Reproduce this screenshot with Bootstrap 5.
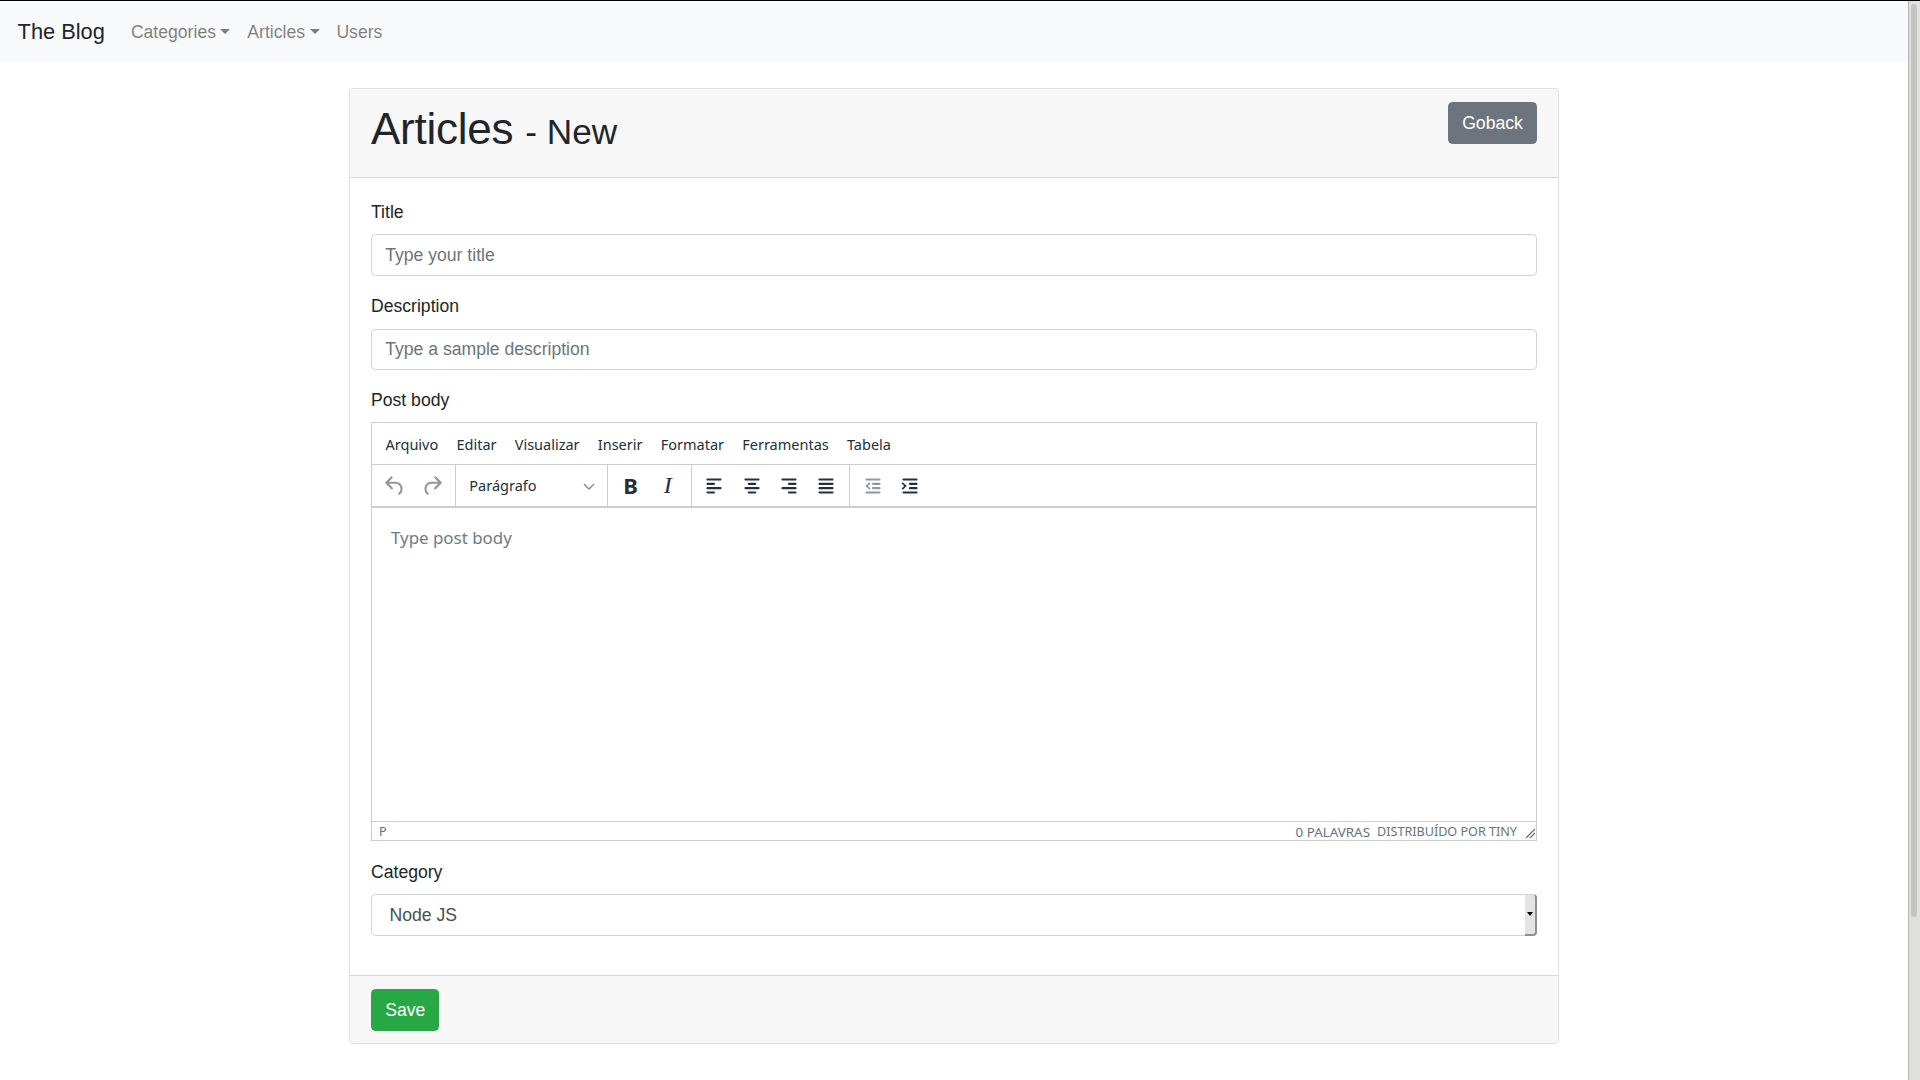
<!DOCTYPE html>
<html lang="en">
<head>
    <meta charset="UTF-8">
    <meta name="viewport" content="width=device-width, initial-scale=1.0">
    <title>Articles - New</title>
    <link href="https://cdn.jsdelivr.net/npm/bootstrap@5.3.0/dist/css/bootstrap.min.css" rel="stylesheet">
    <style>
        html {
            font-size: 17.6px;
        }

        body {
            font-family: "Liberation Sans", Arial, sans-serif;
            border-top: 1px solid #000;
            height: 100vh;
            overflow: hidden;
            color: #212529;
        }

        .page-main {
            min-width: 0;
        }

        .page-scroll {
            width: 12px;
            background: #e0e0de;
            border-left: 1px solid #b4b4b2;
        }

        .page-scroll div {
            width: 6px;
            height: 913px;
            margin: 3px 0 0 2px;
            background: #c3c3c1;
            border-radius: 3px;
        }

        .top-bar {
            height: 61px;
            background: #f8f9fa;
            padding: 0 1rem;
        }

        .top-bar .navbar-brand {
            color: #212529;
            font-size: 21.8px;
            padding-top: 8px;
        }

        .top-bar .nav-link {
            color: rgba(0, 0, 0, .5);
            padding: 2px .48rem 0;
        }

        .page-box {
            --bs-card-border-color: rgba(0, 0, 0, .125);
            --bs-card-inner-border-radius: 3.4px;
            width: 1210px;
            margin: 26px auto 0;
            border-radius: 4.4px;
        }

        .page-box > .card-header,
        .page-box > .card-footer {
            background: #f7f7f7;
            padding: .75rem 21px;
        }

        .page-box > .card-footer {
            padding-bottom: 12px;
        }

        .page-box > .card-body {
            padding: 21px 21px 21.6px;
        }

        .page-title {
            font-size: 44px;
            font-weight: 400;
            line-height: 1.2;
            letter-spacing: -.25px;
            padding-top: 1px;
            margin-bottom: 7.8px;
        }

        .page-title span {
            font-size: 35.2px;
            letter-spacing: 0;
        }

        .btn-goback {
            --bs-btn-bg: #6c757d;
            --bs-btn-border-color: #6c757d;
            --bs-btn-border-radius: 4.4px;
        }

        .btn-save {
            --bs-btn-bg: #28a745;
            --bs-btn-border-color: #28a745;
            --bs-btn-color: #fff;
            --bs-btn-border-radius: 4.4px;
        }

        .form-control {
            border-color: #ced4da;
            border-radius: 4.4px;
            color: #495057;
        }

        .form-control::placeholder {
            color: #6c757d;
        }

        .desc-group {
            margin-bottom: 16.6px;
        }

        .post-label {
            margin-bottom: 9px;
        }

        /* native select button of the reference */
        .pick-wrap select {
            height: 42px;
            padding-left: 17.6px;
        }

        .pick-arrow {
            position: absolute;
            top: 0;
            right: 0;
            bottom: 0;
            width: 12px;
            background: #e4e4e4;
            border-top: 1px solid #d6d6d6;
            border-right: 2px solid #8f8f8f;
            border-bottom: 2px solid #8f8f8f;
            border-radius: 0 4px 4px 0;
            pointer-events: none;
        }

        .pick-arrow::after {
            content: "";
            border-top: 4px solid #000;
            border-left: 3.5px solid transparent;
            border-right: 3.5px solid transparent;
        }

        /* editor */
        .editor-box {
            height: 419px;
            border: 1px solid #ccc;
            font-family: "Noto Sans", sans-serif;
            color: #222f3e;
        }

        .editor-menu {
            height: 42px;
            gap: 18.2px;
            padding: 3px 13.5px 0;
            font-size: 14.5px;
            border-bottom: 1px solid #ccc;
        }

        .editor-tools {
            height: 43px;
            border-bottom: 2px solid #ccc;
        }

        .tool-group {
            padding: 0 4px;
            border-right: 1px solid #ccc;
        }

        .tool-group.last-group {
            border-right: 0;
        }

        .tool-btn {
            width: 37.4px;
            height: 37.4px;
        }

        .tool-btn svg {
            width: 26px;
            height: 26px;
            fill: #222f3e;
        }

        .tool-btn.is-off svg {
            fill: rgba(34, 47, 62, .5);
        }

        .tool-bold {
            font: 700 22px "Noto Sans", sans-serif;
            padding-bottom: 2px;
        }

        .tool-italic {
            font: italic 400 24px "Liberation Serif", serif;
        }

        .format-pick {
            width: 143px;
            padding: 1px 8px 0 9.5px;
            font-size: 14.5px;
        }

        .format-pick svg {
            width: 12px;
            height: 7px;
            stroke: #7e8894;
            stroke-width: 1.4;
            fill: none;
        }

        .editor-text {
            padding: 17px 19px;
            font-size: 16.9px;
            color: #6f7a87;
        }

        .editor-status {
            height: 19px;
            border-top: 1px solid #ccc;
            padding: 3px 1px 0 7px;
            font-size: 12.6px;
            color: #67727f;
        }

        .status-right {
            gap: 7px;
            margin-right: 8px;
            text-transform: uppercase;
        }

        .status-count {
            font-size: 13.4px;
            line-height: 1;
        }

        .resize-mark {
            width: 10px;
            height: 10px;
            stroke: #5c6670;
            stroke-width: 1.2;
        }
    </style>
</head>

<body class="d-flex">
    <div class="page-main flex-grow-1">
        <nav class="navbar top-bar d-flex justify-content-start flex-nowrap">
            <a class="navbar-brand" href="#">The Blog</a>
            <div class="d-flex">
                <a class="nav-link dropdown-toggle" href="#">Categories</a>
                <a class="nav-link dropdown-toggle" href="#">Articles</a>
                <a class="nav-link" href="#">Users</a>
            </div>
        </nav>

        <div class="card page-box">
            <div class="card-header d-flex justify-content-between align-items-start">
                <h1 class="page-title">Articles <span>- New</span></h1>
                <a href="#" class="btn btn-secondary btn-goback">Goback</a>
            </div>
            <div class="card-body">
                <form>
                    <div class="mb-3">
                        <label for="title" class="form-label">Title</label>
                        <input type="text" class="form-control" id="title" placeholder="Type your title">
                    </div>
                    <div class="desc-group">
                        <label for="description" class="form-label">Description</label>
                        <input type="text" class="form-control" id="description" placeholder="Type a sample description">
                    </div>
                    <div class="mb-3">
                        <label class="form-label post-label">Post body</label>
                        <div class="editor-box d-flex flex-column">
                            <div class="editor-menu d-flex align-items-center">
                                <span>Arquivo</span>
                                <span>Editar</span>
                                <span>Visualizar</span>
                                <span>Inserir</span>
                                <span>Formatar</span>
                                <span>Ferramentas</span>
                                <span>Tabela</span>
                            </div>
                            <div class="editor-tools d-flex">
                                <div class="tool-group d-flex align-items-center">
                                    <div class="tool-btn is-off d-flex align-items-center justify-content-center">
                                        <svg viewBox="0 0 24 24"><path d="M6.4 8H12c3.7 0 6.2 2 6.8 5.1.6 2.7-.4 5.6-2.3 6.8a1 1 0 0 1-1-1.8c1.1-.7 1.8-2.7 1.4-4.6-.5-2.1-2.1-3.5-4.9-3.5H6.4l3.3 3.3a1 1 0 1 1-1.4 1.4l-5-5a1 1 0 0 1 0-1.4l5-5a1 1 0 0 1 1.4 1.4L6.4 8z"/></svg>
                                    </div>
                                    <div class="tool-btn is-off d-flex align-items-center justify-content-center">
                                        <svg viewBox="0 0 24 24"><path d="M17.6 8H12c-3.7 0-6.2 2-6.8 5.1-.6 2.7.4 5.6 2.3 6.8a1 1 0 0 0 1-1.8c-1.1-.7-1.8-2.7-1.4-4.6.5-2.1 2.1-3.5 4.9-3.5h5.6l-3.3 3.3a1 1 0 1 0 1.4 1.4l5-5a1 1 0 0 0 0-1.4l-5-5a1 1 0 0 0-1.4 1.4L17.6 8z"/></svg>
                                    </div>
                                </div>
                                <div class="tool-group d-flex align-items-center">
                                    <div class="format-pick d-flex align-items-center justify-content-between">
                                        <span>Parágrafo</span>
                                        <svg viewBox="0 0 12 7"><path d="M1 1l5 5 5-5"/></svg>
                                    </div>
                                </div>
                                <div class="tool-group d-flex align-items-center">
                                    <div class="tool-btn tool-bold d-flex align-items-center justify-content-center">B</div>
                                    <div class="tool-btn tool-italic d-flex align-items-center justify-content-center">I</div>
                                </div>
                                <div class="tool-group d-flex align-items-center">
                                    <div class="tool-btn d-flex align-items-center justify-content-center">
                                        <svg viewBox="0 0 24 24"><rect x="5" y="5" width="14" height="2" rx="1"/><rect x="5" y="9" width="8" height="2" rx="1"/><rect x="5" y="13" width="14" height="2" rx="1"/><rect x="5" y="17" width="8" height="2" rx="1"/></svg>
                                    </div>
                                    <div class="tool-btn d-flex align-items-center justify-content-center">
                                        <svg viewBox="0 0 24 24"><rect x="5" y="5" width="14" height="2" rx="1"/><rect x="8" y="9" width="8" height="2" rx="1"/><rect x="5" y="13" width="14" height="2" rx="1"/><rect x="8" y="17" width="8" height="2" rx="1"/></svg>
                                    </div>
                                    <div class="tool-btn d-flex align-items-center justify-content-center">
                                        <svg viewBox="0 0 24 24"><rect x="5" y="5" width="14" height="2" rx="1"/><rect x="11" y="9" width="8" height="2" rx="1"/><rect x="5" y="13" width="14" height="2" rx="1"/><rect x="11" y="17" width="8" height="2" rx="1"/></svg>
                                    </div>
                                    <div class="tool-btn d-flex align-items-center justify-content-center">
                                        <svg viewBox="0 0 24 24"><rect x="5" y="5" width="14" height="2" rx="1"/><rect x="5" y="9" width="14" height="2" rx="1"/><rect x="5" y="13" width="14" height="2" rx="1"/><rect x="5" y="17" width="14" height="2" rx="1"/></svg>
                                    </div>
                                </div>
                                <div class="tool-group last-group d-flex align-items-center">
                                    <div class="tool-btn is-off d-flex align-items-center justify-content-center">
                                        <svg viewBox="0 0 24 24"><rect x="5" y="5" width="14" height="2" rx="1"/><rect x="11" y="9" width="8" height="2" rx="1"/><rect x="11" y="13" width="8" height="2" rx="1"/><rect x="5" y="17" width="14" height="2" rx="1"/><path d="M8.7 8.6l1 1L7.3 12l2.4 2.4-1 1L5 12z"/></svg>
                                    </div>
                                    <div class="tool-btn d-flex align-items-center justify-content-center">
                                        <svg viewBox="0 0 24 24"><rect x="5" y="5" width="14" height="2" rx="1"/><rect x="11" y="9" width="8" height="2" rx="1"/><rect x="11" y="13" width="8" height="2" rx="1"/><rect x="5" y="17" width="14" height="2" rx="1"/><path d="M5.3 8.6l-1 1L6.7 12l-2.4 2.4 1 1L9 12z"/></svg>
                                    </div>
                                </div>
                            </div>
                            <div class="editor-text flex-grow-1">Type post body</div>
                            <div class="editor-status d-flex align-items-center justify-content-between">
                                <span>P</span>
                                <div class="d-flex align-items-center">
                                    <div class="status-right d-flex align-items-center">
                                        <span class="status-count">0 palavras</span>
                                        <span>Distribuído por Tiny</span>
                                    </div>
                                    <svg class="resize-mark" viewBox="0 0 10 10"><path d="M1 10L10 1M5 10l5-5"/></svg>
                                </div>
                            </div>
                        </div>
                    </div>
                    <div class="mb-3">
                        <label for="category" class="form-label">Category</label>
                        <div class="pick-wrap position-relative">
                            <select class="form-control" id="category">
                                <option>Node JS</option>
                            </select>
                            <span class="pick-arrow d-flex align-items-center justify-content-center"></span>
                        </div>
                    </div>
                </form>
            </div>
            <div class="card-footer">
                <button type="button" class="btn btn-success btn-save">Save</button>
            </div>
        </div>
    </div>
    <div class="page-scroll flex-shrink-0"><div></div></div>
    <script src="https://cdn.jsdelivr.net/npm/bootstrap@5.3.0/dist/js/bootstrap.bundle.min.js"></script>
</body>
</html>
